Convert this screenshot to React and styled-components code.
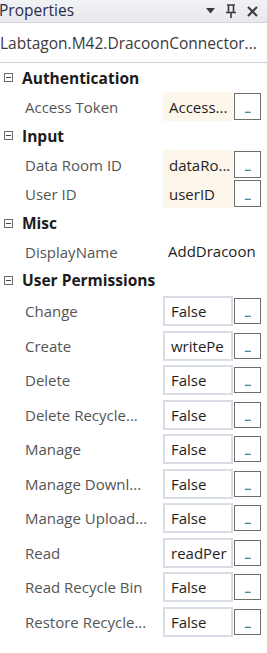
import React from 'react'
import styled, { createGlobalStyle } from 'styled-components';

const GlobalStyle = createGlobalStyle`
  html, body {
    margin: 0;
    padding: 0;
    background: #ffffff;
  }
  body {
    font-family: "Open Sans", "Noto Sans", sans-serif;
  }
`;

const Panel = styled.div`
  width: 267px;
  height: 653px;
  background: #ffffff;
  overflow: hidden;
  display: flex;
  flex-direction: column;
`;

const TitleBar = styled.div`
  height: 22px;
  background: linear-gradient(#f1f2f5, #e7e9ed);
  border-bottom: 1px solid #d4d6da;
  display: flex;
  align-items: center;
  justify-content: space-between;
  padding-right: 8px;
`;

const Title = styled.span`
  font-size: 15.5px;
  color: #2b2b4a;
  margin-left: -1px;
  margin-top: -3px;
`;

const TitleIcons = styled.div`
  display: flex;
  align-items: center;
  gap: 11px;
  margin-right: 1px;
`;

const ObjectName = styled.div`
  height: 39px;
  border-bottom: 1px solid #cfd1d5;
  display: flex;
  align-items: center;
  font-size: 15.5px;
  color: #3a3a3a;
  white-space: nowrap;
`;

const Grid = styled.div`
  display: flex;
  flex-direction: column;
`;

const CategoryRow = styled.div`
  height: ${p => p.h || 29}px;
  display: flex;
  align-items: center;
  padding-left: 4px;
  gap: 9px;
  font-size: 15.5px;
  font-weight: 700;
  color: #1b1b1b;
`;

const Toggle = styled.span`
  width: 9px;
  height: 9px;
  border: 1px solid #6a6a6a;
  position: relative;
  box-sizing: border-box;

  &::after {
    content: '';
    position: absolute;
    left: 1px;
    right: 1px;
    top: 3px;
    height: 1px;
    background: #444;
  }
`;

const PropRow = styled.div`
  height: ${p => p.h}px;
  display: flex;
  align-items: center;
`;

const Label = styled.div`
  width: 138px;
  padding-left: 25px;
  font-size: 15px;
  color: #555555;
  white-space: nowrap;
  overflow: hidden;
`;

const BoundValue = styled.div`
  width: 70px;
  align-self: stretch;
  background: #fdf6ea;
  display: flex;
  align-items: center;
  padding-left: 6px;
  box-sizing: border-box;
  font-size: 15px;
  color: #1e1e1e;
  white-space: nowrap;
  overflow: hidden;
`;

const PlainValue = styled.div`
  padding-left: 5px;
  font-size: 15px;
  color: #1e1e1e;
  white-space: nowrap;
  margin-top: -3px;
`;

const BoxValue = styled.div`
  width: 70px;
  height: 30px;
  border: 2px solid #d9dee6;
  box-sizing: border-box;
  display: flex;
  align-items: center;
  padding-left: 6px;
  font-size: 15px;
  color: #1e1e1e;
  white-space: nowrap;
  overflow: hidden;
`;

const DotsButton = styled.div`
  width: 27px;
  height: ${p => p.h || 26}px;
  border: 1.5px solid #6e6e6e;
  box-sizing: border-box;
  background: #ffffff;
  display: flex;
  align-items: flex-end;
  justify-content: center;
  padding-bottom: 5px;
  font-size: 9px;
  font-weight: 700;
  line-height: 1;
  color: #333;
  margin-left: 1px;
  letter-spacing: -0.5px;
`;

const DownArrow = () => (
  <svg width="9" height="6" viewBox="0 0 9 6">
    <path d="M0 0 H9 L4.5 5.5 Z" fill="#3a3a3a" />
  </svg>
);

const Pin = () => (
  <svg width="10" height="14" viewBox="0 0 10 14">
    <path d="M1 1 H9 M2.5 1 V8 M7.5 1 V8 M0 8.5 H10 M5 8.5 V14" stroke="#3a3a3a" strokeWidth="1.6" fill="none" />
  </svg>
);

const Close = () => (
  <svg width="11" height="11" viewBox="0 0 11 11">
    <path d="M1 1 L10 10 M10 1 L1 10" stroke="#3a3a3a" strokeWidth="2" />
  </svg>
);

const permissions = [
  ['Change', 'False'],
  ['Create', 'writePe'],
  ['Delete', 'False'],
  ['Delete Recycle...', 'False'],
  ['Manage', 'False'],
  ['Manage Downl...', 'False'],
  ['Manage Upload...', 'False'],
  ['Read', 'readPer'],
  ['Read Recycle Bin', 'False'],
  ['Restore Recycle...', 'False'],
];

const Category = ({ name, h }) => (
  <CategoryRow h={h}>
    <Toggle />
    <span>{name}</span>
  </CategoryRow>
);

const App = () => {
  return (
    <Panel>
      <GlobalStyle />
      <TitleBar>
        <Title>Properties</Title>
        <TitleIcons>
          <DownArrow />
          <Pin />
          <Close />
        </TitleIcons>
      </TitleBar>
      <ObjectName>Labtagon.M42.DracoonConnector...</ObjectName>
      <Grid>
        <Category name="Authentication" />
        <PropRow h={29}>
          <Label>Access Token</Label>
          <BoundValue>Access...</BoundValue>
          <DotsButton h={27}>...</DotsButton>
        </PropRow>
        <Category name="Input" />
        <PropRow h={29}>
          <Label>Data Room ID</Label>
          <BoundValue>dataRo...</BoundValue>
          <DotsButton h={27}>...</DotsButton>
        </PropRow>
        <PropRow h={29}>
          <Label>User ID</Label>
          <BoundValue>userID</BoundValue>
          <DotsButton h={27}>...</DotsButton>
        </PropRow>
        <Category name="Misc" h={30} />
        <PropRow h={28}>
          <Label>DisplayName</Label>
          <PlainValue>AddDracoon</PlainValue>
        </PropRow>
        <Category name="User Permissions" h={28} />
        {permissions.map(([label, value], index) => (
          <PropRow key={index} h={index % 2 ? 35 : 34}>
            <Label>{label}</Label>
            <BoxValue>{value}</BoxValue>
            <DotsButton>...</DotsButton>
          </PropRow>
        ))}
      </Grid>
    </Panel>
  );
};

export default App;
